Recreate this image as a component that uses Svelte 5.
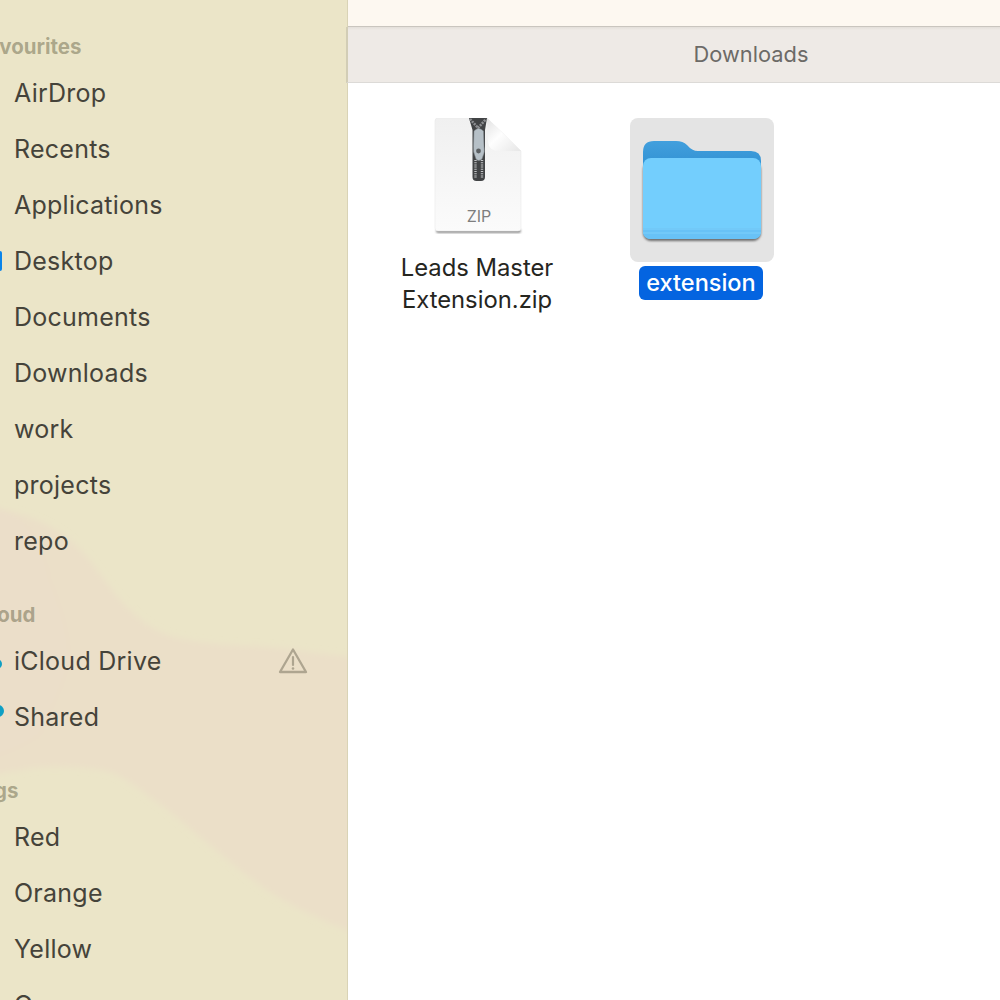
<script lang="ts">
	type Row = { name: string; mark?: 'desktop' | 'cloud' | 'shared'; warn?: boolean };
	type Section = { title: string; offset: number; rows: Row[] };

	const sections: Section[] = [
		{
			title: 'Favourites',
			offset: -24,
			rows: [
				{ name: 'AirDrop' },
				{ name: 'Recents' },
				{ name: 'Applications' },
				{ name: 'Desktop', mark: 'desktop' },
				{ name: 'Documents' },
				{ name: 'Downloads' },
				{ name: 'work' },
				{ name: 'projects' },
				{ name: 'repo' }
			]
		},
		{
			title: 'iCloud',
			offset: -29,
			rows: [
				{ name: 'iCloud Drive', mark: 'cloud', warn: true },
				{ name: 'Shared', mark: 'shared' }
			]
		},
		{
			title: 'Tags',
			offset: -30,
			rows: [{ name: 'Red' }, { name: 'Orange' }, { name: 'Yellow' }, { name: 'Green' }]
		}
	];
</script>

<div class="window">
	<aside class="sidebar">
		<svg class="wash" viewBox="0 0 347 1000" width="347" height="1000" aria-hidden="true">
			<defs>
				<filter id="haze" x="-10%" y="-10%" width="120%" height="120%">
					<feGaussianBlur stdDeviation="3" />
				</filter>
			</defs>
			<g filter="url(#haze)">
				<path
					d="M-10 507 C35 515 65 530 87 557 C105 580 118 600 133 613 C148 627 160 633 173 637 C205 645 235 645 267 647 C295 649 320 654 357 658 L357 934 C315 918 290 905 267 890 C245 875 222 855 200 837 C180 820 165 807 150 797 C130 782 115 771 100 770 C75 766 50 766 33 768 C20 770 10 772 -10 775 Z"
					fill="#ebdfc8"
				/>
				<path
					d="M-10 507 C20 512 40 530 50 580 C62 610 72 640 68 665 C62 690 50 710 40 735 C25 745 10 752 -10 758 Z"
					fill="#ebdec9"
				/>
			</g>
		</svg>
		{#each sections as section}
			<section class="group">
				<h2 style="margin-left: {section.offset}px">{section.title}</h2>
				<ul>
					{#each section.rows as row}
						<li>
							{#if row.mark}<span class="mark {row.mark}"></span>{/if}
							<span class="name">{row.name}</span>
							{#if row.warn}
								<svg class="warn" viewBox="0 0 30 28" width="30" height="28" aria-hidden="true">
									<path
										d="M15 2.5 L28 25 H2 Z"
										fill="none"
										stroke="#aea590"
										stroke-width="2.3"
										stroke-linejoin="round"
									/>
									<path d="M15 10 V18" stroke="#aea590" stroke-width="2.2" stroke-linecap="round" />
									<circle cx="15" cy="21.5" r="1.3" fill="#aea590" />
								</svg>
							{/if}
						</li>
					{/each}
				</ul>
			</section>
		{/each}
	</aside>

	<main class="finder">
		<div class="topbar"></div>
		<header class="pathbar">Downloads</header>
		<div class="files">
			<figure class="file">
				<div class="icon">
					<svg viewBox="0 0 94 120" width="94" height="120" aria-hidden="true">
						<defs>
							<linearGradient id="page" x1="0" y1="0" x2="0" y2="1">
								<stop offset="0" stop-color="#f0f0f0" />
								<stop offset="1" stop-color="#fbfbfb" />
							</linearGradient>
							<linearGradient id="fold" x1="0" y1="0" x2="1" y2="1">
								<stop offset="0" stop-color="#e2e2e2" />
								<stop offset="0.45" stop-color="#fefefe" />
								<stop offset="1" stop-color="#e6e6e6" />
							</linearGradient>
							<filter id="soft" x="-10%" y="-10%" width="120%" height="120%">
								<feGaussianBlur stdDeviation="0.8" />
							</filter>
						</defs>
						<!-- svg starts at x=430, so the page runs 435..521 -->
						<rect x="6" y="111" width="85" height="4" rx="2" fill="#8f8f8f" filter="url(#soft)" />
						<path
							d="M8 0 H57 L91 33 V110 Q91 113 88 113 H8 Q5 113 5 110 V3 Q5 0 8 0 Z"
							fill="url(#page)"
							stroke="#e9e9e9"
							stroke-width="0.6"
						/>
						<path d="M57 0 L91 33 H69 Q59 33 58 24 Z" fill="url(#fold)" />
						<path d="M39 0 H57 L55 12 V59 Q55 63 51 63 H46.5 Q42.5 63 42.5 59 V12 Z" fill="#414345" />
						<path d="M40 1 L48 10 L56 1" fill="none" stroke="#8d8f92" stroke-width="2.6" stroke-dasharray="2 1" />
						<path d="M45.5 42 V60 M52 42 V60" stroke="#c3c5c7" stroke-width="2.4" stroke-dasharray="1 1.2" />
						<path
							d="M44 13 Q48.5 8 53.5 13 L54 28 Q55 34 53 38 L52 41 Q48.5 44 46 41 L45 38 Q43 34 43.5 28 Z"
							fill="#b6c0c7"
							stroke="#7f8588"
							stroke-width="0.5"
						/>
						<circle cx="48.5" cy="33" r="2.4" fill="#5b5f62" />
						<text x="49" y="104" text-anchor="middle" class="zip">ZIP</text>
					</svg>
				</div>
				<figcaption>Leads Master<br />Extension.zip</figcaption>
			</figure>

			<figure class="file selected">
				<div class="icon">
					<svg viewBox="0 0 144 144" width="144" height="144" aria-hidden="true">
						<defs>
							<linearGradient id="back" x1="0" y1="0" x2="0" y2="1">
								<stop offset="0" stop-color="#429fdd" />
								<stop offset="1" stop-color="#2a8ccf" />
							</linearGradient>
							<filter id="drop" x="-10%" y="-10%" width="120%" height="120%">
								<feGaussianBlur stdDeviation="1" />
							</filter>
						</defs>
						<path
							d="M13 34 Q13 23 24 23 H46 Q53 23 57 27 Q62 33 68 33 H121 Q131 33 131 43 V60 H13 Z"
							fill="url(#back)"
						/>
						<rect x="13" y="44" width="118" height="79" rx="8" fill="#6d6d6d" filter="url(#drop)" />
						<rect x="13" y="40" width="118" height="81" rx="8" fill="#73cefd" />
						<path d="M13 110 H131 V113 Q131 121 123 121 H21 Q13 121 13 113 Z" fill="#68c2f6" />
						<path d="M13 111 H131 M13 115 H131" stroke="#7cd0fb" stroke-width="1" />
					</svg>
				</div>
				<figcaption><span class="pill">extension</span></figcaption>
			</figure>
		</div>
	</main>
</div>

<style>
	:global(body) {
		margin: 0;
		background: #fff;
	}

	.window {
		display: flex;
		width: 1000px;
		height: 1000px;
		overflow: hidden;
		font-family: Inter, 'Liberation Sans', sans-serif;
	}

	.sidebar {
		position: relative;
		flex: none;
		box-sizing: border-box;
		width: 348px;
		height: 1000px;
		padding-top: 27px;
		overflow: hidden;
		background: #ebe5c8;
		border-right: 1px solid #d9d3b6;
	}

	.wash {
		position: absolute;
		top: 0;
		left: 0;
	}

	.group {
		position: relative;
		margin-bottom: 26px;
	}

	h2 {
		margin: 0;
		height: 38px;
		font-size: 20.5px;
		font-weight: 650;
		line-height: 39px;
		white-space: nowrap;
		color: rgba(80, 78, 50, 0.42);
	}

	ul {
		list-style: none;
		margin: 0;
		padding: 0;
	}

	li {
		position: relative;
		display: flex;
		align-items: center;
		height: 56px;
		padding-left: 14px;
		font-size: 25px;
		letter-spacing: 0.25px;
		color: #45433a;
	}

	.name {
		flex: 1;
	}

	.warn {
		margin-right: 39px;
	}

	.mark {
		position: absolute;
		left: -8px;
	}

	.desktop {
		left: -6px;
		width: 8px;
		height: 20px;
		border-radius: 2px;
		background: #0a84ea;
	}

	.cloud {
		width: 10px;
		height: 10px;
		border-radius: 50%;
		background: #0f9fc4;
		margin-top: 6px;
	}

	.shared {
		width: 12px;
		height: 12px;
		border-radius: 50%;
		background: #0f9fc4;
		margin-top: -12px;
	}

	.finder {
		position: relative;
		flex: 1;
		display: flex;
		flex-direction: column;
		min-width: 0;
		background: #fff;
	}

	.topbar {
		height: 26px;
		background: #fdf8f1;
		border-bottom: 1px solid #c9c5bf;
	}

	.pathbar {
		box-sizing: border-box;
		height: 56px;
		margin-left: -2px;
		padding-left: 154px;
		border-left: 2px solid #d2cdb6;
		border-bottom: 1px solid #dcdad7;
		background: linear-gradient(#e3dfda, #eeeae6 3px);
		text-align: center;
		font-size: 21.8px;
		line-height: 54px;
		color: #6c6a67;
	}

	.files {
		display: flex;
		align-items: flex-start;
		padding: 35px 0 0 57px;
		gap: 81px;
	}

	.file {
		display: flex;
		flex-direction: column;
		align-items: center;
		width: 144px;
		margin: 0;
	}

	.icon {
		display: flex;
		align-items: flex-start;
		justify-content: center;
		width: 144px;
		height: 144px;
		border-radius: 8px;
	}

	.selected .icon {
		background: #e4e4e4;
	}

	.zip {
		font: 400 16px Inter, 'Liberation Sans', sans-serif;
		fill: #7e7e7e;
	}

	figcaption {
		margin-top: -10px;
		text-align: center;
		font-size: 23.8px;
		line-height: 32px;
		white-space: nowrap;
		color: #26261f;
	}

	.selected figcaption {
		margin-top: 4px;
		margin-right: 2px;
	}

	.pill {
		display: block;
		padding: 1px 7px;
		border-radius: 6px;
		background: #0464e0;
		color: #fff;
		font-weight: 500;
		font-size: 23.5px;
	}
</style>
